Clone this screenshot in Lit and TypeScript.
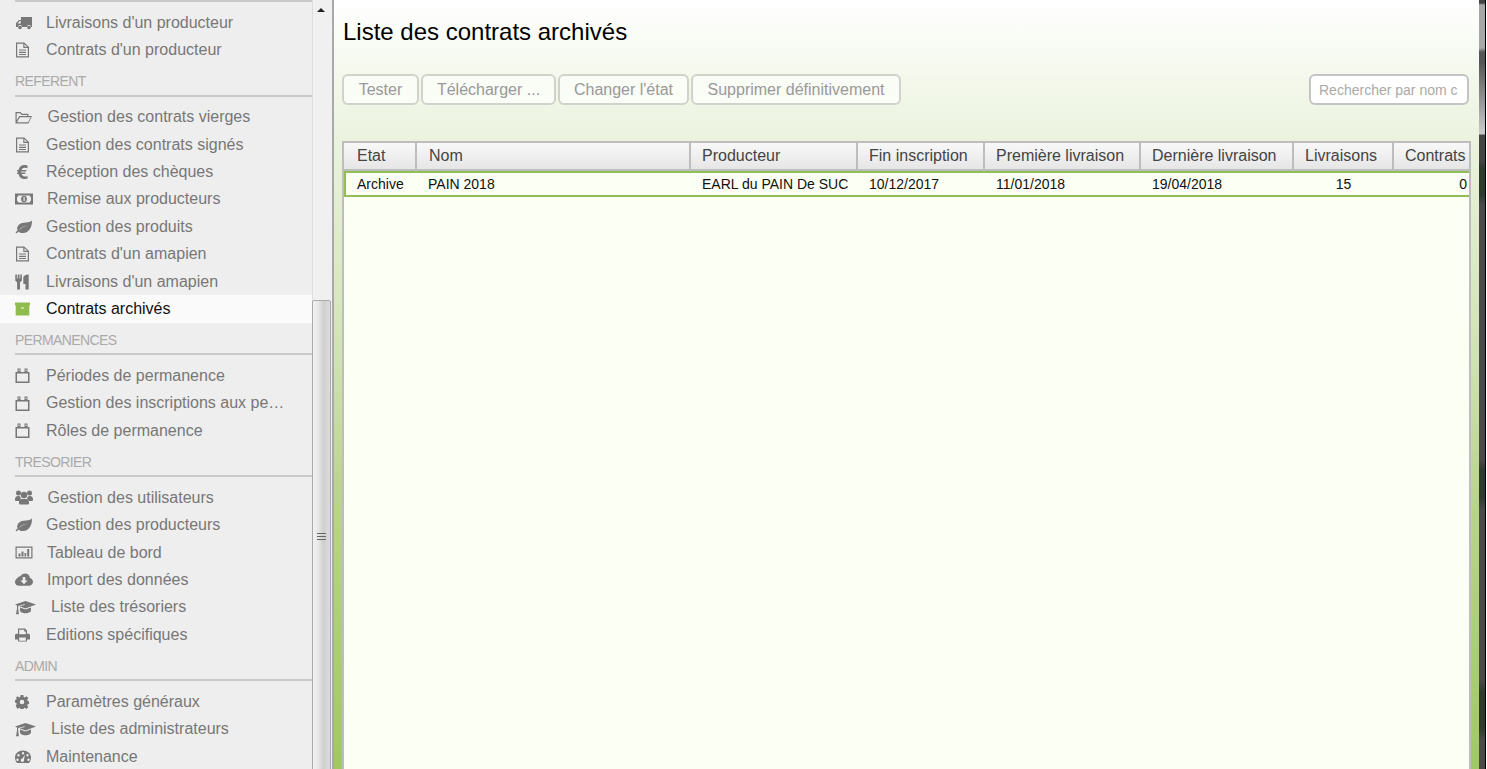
import { LitElement, html, css, svg } from "lit";
import { customElement } from "lit/decorators.js";

const I: Record<string, { w: number; v: string; d: any }> = {
  truck: { w: 17, v: "0 0 17 14", d: svg`<path d="M6 1h11v10h-1a2 2 0 0 0-4 0H7a2 2 0 0 0-4 0H1V7l3-3h2zM2.500 7.500h3.200V5H4.600z" fill-rule="evenodd"/><circle cx="5" cy="11.500" r="1.800"/><circle cx="14" cy="11.500" r="1.800"/>` },
  file: { w: 15, v: "0 0 15 16", d: svg`<path d="M1 .5h8.200L14 5v10.500H1zM2.200 1.700v12.600h10.600V6H8.300V1.700zM9.400 2.200V4.800h2.800zM4 7.500h7v1.100H4zM4 9.800h7v1.100H4zM4 12h7v1.100H4z" fill-rule="evenodd"/>` },
  folder: { w: 18, v: "0 0 18 13", d: svg`<path d="M.5 1h5l1.500 1.800h6.500v2.200h3.500l-3.600 7.500H.5zM1.700 2.200v7.300l2.500-4.500h8.100V4H6.500L5 2.200zM4.900 6.200 2 11.300h11.100l2.500-5.100z" fill-rule="evenodd"/>` },
  euro: { w: 15, v: "0 0 15 16", d: svg`<path d="M12.500 1.500v2.700c-3-1.100-5.100-.4-6 1.900h5l-.5 1.500H6.100v1h4.400l-.5 1.500H6.500c.9 2.300 3.100 3 6 1.800v2.700c-4.500 1.300-8 .2-9-4.500H2v-1.500h1.300v-1H2V6.100h1.500c1-4.700 4.500-5.800 9-4.600z"/>` },
  money: { w: 18, v: "0 0 18 12", d: svg`<path d="M0 .5h18v11H0zM3 2.500a2.500 2.500 0 0 1-1 2v3a2.500 2.500 0 0 1 1 2h12a2.500 2.500 0 0 1 1-2v-3a2.500 2.500 0 0 1-1-2z" fill-rule="evenodd"/><path d="M9 2.800c1.800 0 3 1.400 3 3.200s-1.200 3.200-3 3.200S6 7.800 6 6s1.200-3.200 3-3.200z"/><rect x="8.500" y="4" width="1.200" height="4" fill="#eee"/>` },
  leaf: { w: 17, v: "0 0 17 14", d: svg`<path d="M17 .6c0 7-3 12.400-9 12.400-2 0-3.500-.5-4.500-1.500L1.500 13.500.5 12.500l2-2C1 6 5 2.500 11 2.500c2.500 0 4.500-.7 6-1.900zM3.700 10.400C6 7.800 9 6.300 12.500 5.500 9 6 5.500 7.500 3.700 10.400z" fill-rule="evenodd"/>` },
  cutlery: { w: 14, v: "0 0 14 16", d: svg`<path d="M.3.500h1.600v4h.8v-4h1.800v4h.8v-4h1.600v6.200L5 8.200v7.300H2.100V8.200L.3 6.700zM13.700.500v15h-3.200V10H8.300V4c0-2 2.400-3.500 5.400-3.500z"/>` },
  archive: { w: 15, v: "0 0 15 14", d: svg`<path fill="#8fbc4e" d="M0 .5h15v2.800h-.7V13.500H.7V3.300H0zM6 5.500v1h3v-1z" fill-rule="evenodd"/>` },
  cal: { w: 15, v: "0 0 15 15", d: svg`<path d="M.5 4h2V.5h3V4h4V.5h3V4h2v11H.5zM2 5.500v8h11v-8zM3.500 1.500V3h1V1.500zM10.500 1.500V3h1V1.500z" fill-rule="evenodd"/>` },
  users: { w: 18, v: "0 0 18 15", d: svg`<circle cx="3.500" cy="3" r="2.500"/><circle cx="14.500" cy="3" r="2.500"/><circle cx="9" cy="5" r="3.200"/><path d="M0 10c0-3 1-4 3-4l2 .3c.2 1 .700 1.700 1 2.200-1 .6-1.500 1.500-1.500 2.500H1c-.6 0-1-.4-1-1zM18 10c0-3-1-4-3-4l-2 .3c-.2 1-.700 1.700-1 2.200 1 .6 1.500 1.500 1.500 2.500H17c.6 0 1-.4 1-1zM6.500 9h5c1.800 0 2.500 1.300 2.500 3v1.200c0 .9-.6 1.300-1.500 1.300h-7c-.9 0-1.500-.4-1.500-1.300V12c0-1.700.7-3 2.500-3z"/>` },
  chart: { w: 18, v: "0 0 18 13", d: svg`<path d="M.5.500h17v12H.5zM1.700 1.700v9.600h14.600V1.700z" fill-rule="evenodd"/><path d="M3.500 7.500h2v3h-2zM6.500 5.500h2v5h-2zM9.500 7h1.700v3.500H9.500zM12.200 3h2v7.500h-2z"/>` },
  cloud: { w: 18, v: "0 0 18 13", d: svg`<path d="M4 12.800C1.700 12.800 0 11 0 8.900c0-1.700 1-3 2.500-3.600C2.900 3.700 4.300 3 5.500 3.200 6.500 1.300 8 .4 10 .4c2.700 0 4.800 2 5 4.600 1.800.6 3 2 3 3.800 0 2.200-1.800 4-4 4zM7.700 4v3.500H5.400L9 11.200l3.600-3.700h-2.300V4z" fill-rule="evenodd"/>` },
  grad: { w: 21, v: "0 0 21 15", d: svg`<path d="M10.500 1 21 4.600 10.500 8.500 4.500 6.300 9.800 4.900 9.500 4.200 3.200 6v2.500l.7 5.800H1l1-5.800V5.600L0 4.600z"/><path d="M5 7.500l5.500 2 5.500-2v3c0 1.600-2.600 2.800-5.500 2.800S5 12.100 5 10.500z"/>` },
  print: { w: 15, v: "0 0 15 14", d: svg`<path d="M3 .5h7l2 2v3.200h1.500c.8 0 1.500.7 1.500 1.500v4.300h-3v2H3v-2H0V7.200c0-.8.700-1.500 1.500-1.500H3zM4.200 1.700v4.500h6.600V3.500H9.200V1.700zM4.200 9.500v3.300h6.600V9.500z" fill-rule="evenodd"/>` },
  gear: { w: 14, v: "0 0 14 14", d: svg`<path d="M5.700 0h2.600l.4 1.900 1.200.5L11.500 1.300l1.800 1.800-1.100 1.600.5 1.200 1.900.4v2.600l-1.900.4-.5 1.200 1.100 1.600-1.800 1.800-1.600-1.100-1.200.5-.4 1.900H5.700l-.4-1.900-1.200-.5-1.600 1.100L.7 10.700l1.100-1.600-.5-1.200L0 7.500V5l1.300-.4.500-1.200L.7 3.100l1.800-1.800 1.600 1.100 1.200-.5zM7 4.700a2.300 2.300 0 1 0 0 4.600 2.300 2.300 0 0 0 0-4.600z" fill-rule="evenodd"/>` },
  palette: { w: 16, v: "0 0 16 14", d: svg`<path d="M8 .5c4.500 0 8 3 8 7 0 2.300-1 4.500-2 5.500H2C1 12 0 9.800 0 7.500c0-4 3.500-7 8-7zM8 2a1.200 1.200 0 1 0 0 2.400A1.200 1.200 0 0 0 8 2zM3.500 4a1.200 1.200 0 1 0 0 2.400 1.200 1.200 0 0 0 0-2.400zM12.500 4a1.200 1.200 0 1 0 0 2.400 1.200 1.200 0 0 0 0-2.400zM2.500 8.500a1.200 1.200 0 1 0 0 2.400 1.200 1.200 0 0 0 0-2.400zM13.500 8.500a1.200 1.200 0 1 0 0 2.400 1.200 1.200 0 0 0 0-2.400zM10 4.500 7.500 8.500a1.700 1.700 0 1 0 1.500 1z" fill-rule="evenodd"/>` },
};

const ICON_BOX: Record<string, number> = { folder: 32.5, money: 32, users: 32.5, chart: 32, cloud: 32, grad: 36 };

type Row = { t: string; i: string; active?: boolean };
const SECTIONS: { title?: string; rows: Row[] }[] = [
  { rows: [{ t: "Livraisons d'un producteur", i: "truck" }, { t: "Contrats d'un producteur", i: "file" }] },
  { title: "REFERENT", rows: [
    { t: "Gestion des contrats vierges", i: "folder" },
    { t: "Gestion des contrats signés", i: "file" },
    { t: "Réception des chèques", i: "euro" },
    { t: "Remise aux producteurs", i: "money" },
    { t: "Gestion des produits", i: "leaf" },
    { t: "Contrats d'un amapien", i: "file" },
    { t: "Livraisons d'un amapien", i: "cutlery" },
    { t: "Contrats archivés", i: "archive", active: true },
  ] },
  { title: "PERMANENCES", rows: [
    { t: "Périodes de permanence", i: "cal" },
    { t: "Gestion des inscriptions aux permanences", i: "cal" },
    { t: "Rôles de permanence", i: "cal" },
  ] },
  { title: "TRESORIER", rows: [
    { t: "Gestion des utilisateurs", i: "users" },
    { t: "Gestion des producteurs", i: "leaf" },
    { t: "Tableau de bord", i: "chart" },
    { t: "Import des données", i: "cloud" },
    { t: "Liste des trésoriers", i: "grad" },
    { t: "Editions spécifiques", i: "print" },
  ] },
  { title: "ADMIN", rows: [
    { t: "Paramètres généraux", i: "gear" },
    { t: "Liste des administrateurs", i: "grad" },
    { t: "Maintenance", i: "palette" },
  ] },
];

const BUTTONS = [
  { t: "Tester", w: 77 },
  { t: "Télécharger ...", w: 135 },
  { t: "Changer l'état", w: 131 },
  { t: "Supprimer définitivement", w: 210 },
];

const COLS = [
  { h: "Etat", w: 73, dw: 71, v: "Archive", c: "" },
  { h: "Nom", w: 274, dw: 274, v: "PAIN 2018", c: "" },
  { h: "Producteur", w: 167, dw: 167, v: "EARL du PAIN De SUC", c: "" },
  { h: "Fin inscription", w: 127, dw: 127, v: "10/12/2017", c: "" },
  { h: "Première livraison", w: 156, dw: 156, v: "11/01/2018", c: "" },
  { h: "Dernière livraison", w: 153, dw: 153, v: "19/04/2018", c: "" },
  { h: "Livraisons", w: 100, dw: 99, v: "15", c: "center" },
  { h: "Contrats", w: 77, dw: 76, v: "0", c: "right" },
];

@customElement("app-root")
export class AppRoot extends LitElement {
  static styles = css`
    :host { display: block; width: 1487px; height: 769px; overflow: hidden; font-family: "Liberation Sans", Arial, sans-serif; }
    .page { display: flex; height: 769px; }
    .sidebar { width: 312px; flex: none; background: #eeeeee; overflow: hidden; }
    .topline { height: 2px; margin-left: 15px; background: #c8c8c8; }
    .first { height: 7.1px; }
    .row { height: 27.4px; display: flex; align-items: center; padding-left: 15px; color: #777; font-size: 16px; white-space: nowrap; }
    .row.active { background: #fafafa; color: #111; }
    .ib { flex: none; display: flex; align-items: center; }
    .ib svg { fill: #777; display: block; }
    .label { overflow: hidden; text-overflow: ellipsis; width: 240px; }
    .sec { height: 32.85px; box-sizing: border-box; margin-left: 15px; border-bottom: 2px solid #c8c8c8; margin-bottom: 6.8px; padding-top: 9.5px; color: #aaa; font-size: 14px; line-height: 16px; letter-spacing: -0.6px; }
    .scroll { width: 20px; flex: none; background: #f0f0f0; border-left: 1px solid #ddd; box-sizing: border-box; position: relative; }
    .up { position: absolute; left: 4px; top: 8px; width: 0; height: 0; border-left: 4.5px solid transparent; border-right: 4.5px solid transparent; border-bottom: 4px solid #222; }
    .thumb { position: absolute; left: -1px; right: 1px; top: 300px; height: 480px; box-sizing: border-box; border: 1px solid #aaa; border-radius: 2px; background: linear-gradient(90deg, #f2f2f2, #e8e8e8 30%, #cfcfd0 60%, #dcdcdc); }
    .grip { position: absolute; left: 4px; top: 232px; width: 9px; height: 9px; background: repeating-linear-gradient(180deg, #666 0 1px, transparent 1px 3px); }
    .split { width: 2px; flex: none; background: #a9a9a9; }
    .main { flex: 1; min-width: 0; box-sizing: border-box; padding: 0 8px; background: linear-gradient(180deg, #ffffff 0, #f2f7e9 90px, #e8f1da 160px, #d2e4b6 340px, #b9d48c 500px, #a0c866 769px); display: flex; flex-direction: column; }
    h1 { margin: 0; height: 74px; box-sizing: border-box; padding: 19px 0 0 1px; font-size: 24px; line-height: 26px; font-weight: 400; color: #000; }
    .tools { display: flex; height: 31px; flex: none; gap: 2px; padding-right: 2px; }
    .btn { box-sizing: border-box; height: 31px; border: 2px solid #d0d3cb; border-radius: 6px; background: #fafcf6; color: #999; font: 16px "Liberation Sans", Arial, sans-serif; display: flex; align-items: center; justify-content: center; }
    .search { margin-left: auto; box-sizing: border-box; width: 160px; height: 31px; border: 2px solid #c4c4c4; border-radius: 6px; background: #fff; color: #aaa; font-size: 14px; padding: 0 8px; display: flex; align-items: center; overflow: hidden; white-space: nowrap; }
    .search span { display: block; overflow: hidden; }
    .grid { margin-top: 36px; flex: 1; min-height: 0; box-sizing: border-box; border: 2px solid #bdbdbd; border-bottom: 0; background: #fcfff4; overflow: hidden; }
    .head { display: flex; height: 26px; box-sizing: content-box; background: linear-gradient(180deg, #f8f8f8, #e6e6e6); border-bottom: 2px solid #bdbdbd; }
    .hc { flex: none; box-sizing: border-box; border-right: 2px solid #bdbdbd; padding-left: 11px; font-size: 16px; color: #444; display: flex; align-items: center; white-space: nowrap; overflow: hidden; }
    .hc:first-child { padding-left: 13px; }
    .hc:nth-child(2) { padding-left: 12px; }
    .hc:last-child { border-right: 0; }
    .dat { display: flex; height: 26px; box-sizing: border-box; border: 2px solid #93be57; border-right: 0; }
    .dc { flex: none; box-sizing: border-box; padding-left: 11px; font-size: 14px; color: #111; display: flex; align-items: center; white-space: nowrap; overflow: hidden; }
    .dc.center { justify-content: center; padding: 0; }
    .dc.right { justify-content: flex-end; padding: 0 2px 0 0; }
    .edge { width: 8px; flex: none; display: flex; }
    .dark { width: 6px; background: linear-gradient(180deg, #444 0, #444 3px, #a6a6a6 5px, #a8a8a8 48px, #555 52px, #555 62px, #ccc 134px, #444 135px, #444 160px, #2f3a2f 168px, #2f3a2f 195px, #4a4a4a 205px, #4a4a4a 460px, #2f3a2f 470px, #2f3a2f 498px, #4a4a4a 510px, #4a4a4a 680px, #2f3a2f 692px, #2f3a2f 728px, #4a4a4a 740px); }
    .k { width: 1px; background: #000; }
    .w { width: 1px; background: #fff; }
  `;

  private icon(name: string) {
    const ic = I[name];
    const box = ICON_BOX[name] ?? 31;
    const [, , vw, vh] = ic.v.split(" ").map(Number);
    return html`<span class="ib" style="width:${box}px"><svg width=${ic.w} height=${(ic.w * vh) / vw} viewBox=${ic.v}>${ic.d}</svg></span>`;
  }

  render() {
    return html`<div class="page">
      <nav class="sidebar">
        <div class="topline"></div>
        <div class="first"></div>
        ${SECTIONS.map(s => html`
          ${s.title ? html`<div class="sec">${s.title}</div>` : ""}
          ${s.rows.map(r => html`<div class="row ${r.active ? "active" : ""}">${this.icon(r.i)}<span class="label">${r.t}</span></div>`)}
        `)}
      </nav>
      <div class="scroll"><div class="up"></div><div class="thumb"><div class="grip"></div></div></div>
      <div class="split"></div>
      <main class="main">
        <h1>Liste des contrats archivés</h1>
        <div class="tools">
          ${BUTTONS.map(b => html`<div class="btn" style="width:${b.w}px">${b.t}</div>`)}
          <div class="search"><span>Rechercher par nom c</span></div>
        </div>
        <div class="grid">
          <div class="head">${COLS.map(c => html`<div class="hc" style="width:${c.w}px">${c.h}</div>`)}</div>
          <div class="dat">${COLS.map(c => html`<div class="dc ${c.c}" style="width:${c.dw}px">${c.v}</div>`)}</div>
        </div>
      </main>
      <div class="edge"><div class="dark"></div><div class="k"></div><div class="w"></div></div>
    </div>`;
  }
}
